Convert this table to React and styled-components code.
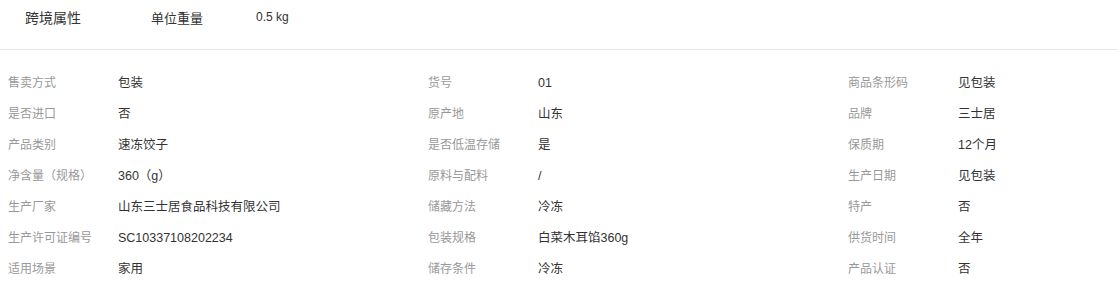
import React from "react"
import styled, { createGlobalStyle } from "styled-components"

const GlobalStyle = createGlobalStyle`
    body {
        margin: 0;
        background: #fff;
        font-family: "Liberation Sans", Arial, "Noto Sans CJK SC", sans-serif;
    }
`

// faixa de cima com o atributo de peso
const Cabecalho = styled.div`
    display: flex;
    align-items: center;
    height: 32px;
    padding: 1px 0 16px 25px;
    border-bottom: 1px solid #e8e8e8;
    color: #333;
`

const CabecalhoTitulo = styled.div`
    width: 126px;
    font-size: 14px;
`

const CabecalhoRotulo = styled.div`
    width: 105px;
    font-size: 13px;
`

const CabecalhoValor = styled.div`
    font-size: 12px;
`

// tabela de atributos em tres colunas
const Grade = styled.div`
    display: grid;
    grid-template-columns: 420px 420px 1fr;
    padding: 18px 0 0 8px;
`

const Coluna = styled.div`
    display: flex;
    flex-direction: column;
`

const Linha = styled.div`
    display: flex;
    height: 31px;
    line-height: 31px;
    font-size: 12px;
`

const Rotulo = styled.div`
    width: 110px;
    color: #999;
`

const Valor = styled.div`
    color: #333;
    font-size: 12.5px;
`

const colunas = [
    [
        ["售卖方式", "包装"],
        ["是否进口", "否"],
        ["产品类别", "速冻饺子"],
        ["净含量（规格）", "360（g）"],
        ["生产厂家", "山东三士居食品科技有限公司"],
        ["生产许可证编号", "SC10337108202234"],
        ["适用场景", "家用"],
    ],
    [
        ["货号", "01"],
        ["原产地", "山东"],
        ["是否低温存储", "是"],
        ["原料与配料", "/"],
        ["储藏方法", "冷冻"],
        ["包装规格", "白菜木耳馅360g"],
        ["储存条件", "冷冻"],
    ],
    [
        ["商品条形码", "见包装"],
        ["品牌", "三士居"],
        ["保质期", "12个月"],
        ["生产日期", "见包装"],
        ["特产", "否"],
        ["供货时间", "全年"],
        ["产品认证", "否"],
    ],
]

export default function App() {
    return <>
        <GlobalStyle />

        <Cabecalho>
            <CabecalhoTitulo>跨境属性</CabecalhoTitulo>
            <CabecalhoRotulo>单位重量</CabecalhoRotulo>
            <CabecalhoValor>0.5 kg</CabecalhoValor>
        </Cabecalho>

        <Grade>
            { colunas.map((coluna, i) => (
                <Coluna key={ i }>
                    { coluna.map(([rotulo, valor]) => (
                        <Linha key={ rotulo }>
                            <Rotulo>{ rotulo }</Rotulo>
                            <Valor>{ valor }</Valor>
                        </Linha>
                    )) }
                </Coluna>
            )) }
        </Grade>
    </>
}
